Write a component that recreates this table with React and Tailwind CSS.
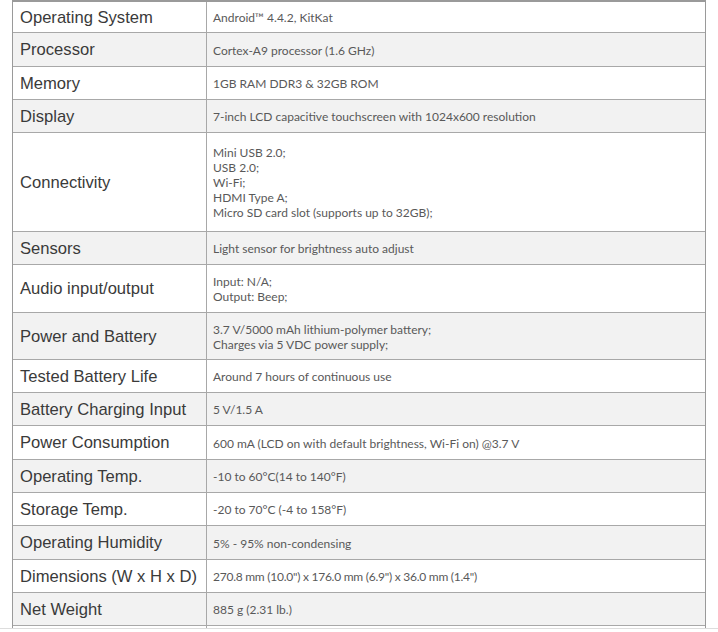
const rows = [
  { label: 'Operating System', value: ['Android™ 4.4.2, KitKat'], h: 'h-[31px]' },
  { label: 'Processor', value: ['Cortex-A9 processor (1.6 GHz)'], h: 'h-[34px]' },
  { label: 'Memory', value: ['1GB RAM DDR3 & 32GB ROM'], h: 'h-[33px]' },
  { label: 'Display', value: ['7-inch LCD capacitive touchscreen with 1024x600 resolution'], h: 'h-[33px]' },
  {
    label: 'Connectivity',
    value: ['Mini USB 2.0;', 'USB 2.0;', 'Wi-Fi;', 'HDMI Type A;', 'Micro SD card slot (supports up to 32GB);'],
    h: 'h-[99px]',
  },
  { label: 'Sensors', value: ['Light sensor for brightness auto adjust'], h: 'h-[33px]' },
  { label: 'Audio input/output', value: ['Input: N/A;', 'Output: Beep;'], h: 'h-[48px]' },
  {
    label: 'Power and Battery',
    value: ['3.7 V/5000 mAh lithium-polymer battery;', 'Charges via 5 VDC power supply;'],
    h: 'h-[47px]',
  },
  { label: 'Tested Battery Life', value: ['Around 7 hours of continuous use'], h: 'h-[33px]' },
  { label: 'Battery Charging Input', value: ['5 V/1.5 A'], h: 'h-[33px]' },
  { label: 'Power Consumption', value: ['600 mA (LCD on with default brightness, Wi-Fi on) @3.7 V'], h: 'h-[34px]' },
  { label: 'Operating Temp.', value: ['-10 to 60°C(14 to 140°F)'], h: 'h-[33px]' },
  { label: 'Storage Temp.', value: ['-20 to 70°C (-4 to 158°F)'], h: 'h-[33px]' },
  { label: 'Operating Humidity', value: ['5% - 95% non-condensing'], h: 'h-[34px]' },
  {
    label: 'Dimensions (W x H x D)',
    value: ['270.8 mm (10.0") x 176.0 mm (6.9") x 36.0 mm (1.4")'],
    h: 'h-[33px]',
    narrow: true,
  },
  { label: 'Net Weight', value: ['885 g (2.31 lb.)'], h: 'h-[33px]' },
];

export default function App() {
  return (
    <div className="w-[718px] h-[632px] bg-white overflow-hidden">
      <div className="ml-[12px] w-[694px] border-t-2 border-x border-[#9a9a9a]">
        {rows.map((row, i) => (
          <div
            key={row.label}
            className={`flex border-b border-[#a8a8a8] ${row.h} ${i % 2 === 1 ? 'bg-[#f2f2f2]' : 'bg-white'}`}
          >
            <div className="w-[194px] shrink-0 flex items-center pl-[7px] pt-[2px] border-r border-[#a8a8a8] font-['Liberation_Sans',Arial,sans-serif] text-[16.6px] text-[#3a3a3a]">
              {row.label}
            </div>
            <div
              className={`flex-1 flex flex-col justify-center pl-[6px] pt-px font-['Lato',sans-serif] text-[12px] leading-[15px] text-[#595959] ${
                row.narrow ? 'tracking-[-0.25px]' : ''
              }`}
            >
              {row.value.map((line) => (
                <span key={line}>{line}</span>
              ))}
            </div>
          </div>
        ))}
        <div className="flex h-[2px]">
          <div className="w-[194px] border-r border-[#a8a8a8]" />
        </div>
      </div>
      <div className="h-px bg-[#dddddd]" />
    </div>
  );
}
